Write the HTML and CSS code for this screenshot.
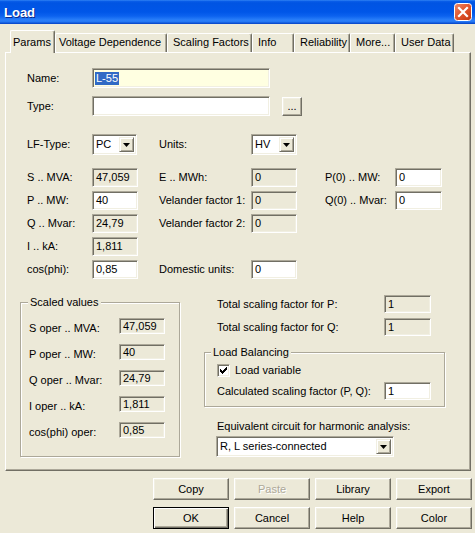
FILE: index.html
```html
<!DOCTYPE html>
<html>
<head>
<meta charset="utf-8">
<title>Load</title>
<link rel="stylesheet" href="styles.css">
</head>
<body>
<div class="window">
  <div class="titlebar">
    <span class="title">Load</span>
    <svg class="close" width="18" height="18" viewBox="0 0 18 18">
      <defs>
        <linearGradient id="cg" x1="0" y1="0" x2="1" y2="1">
          <stop offset="0" stop-color="#f08a6a"/>
          <stop offset="0.5" stop-color="#e0552d"/>
          <stop offset="1" stop-color="#c2350f"/>
        </linearGradient>
      </defs>
      <rect x="0.5" y="0.5" width="17" height="17" rx="3" fill="url(#cg)" stroke="#ffffff"/>
      <path d="M5 5L13 13M13 5L5 13" stroke="#ffffff" stroke-width="2.2" stroke-linecap="square"/>
    </svg>
  </div>
  <div class="client">
    <div class="tabs">
      <div class="tab sel t-params">Params</div>
      <div class="tab t-volt">Voltage Dependence</div>
      <div class="tab t-scal">Scaling Factors</div>
      <div class="tab t-info">Info</div>
      <div class="tab t-rel">Reliability</div>
      <div class="tab t-more">More...</div>
      <div class="tab t-user">User Data</div>
    </div>
    <div class="panel">
      <div class="sec-top">
        <div class="row r-name">
          <span class="lbl w65">Name:</span>
          <div class="fld wide name"><span class="hl">L-55</span></div>
        </div>
        <div class="row r-type">
          <span class="lbl w65">Type:</span>
          <div class="fld wide"></div>
          <div class="btn dots">...</div>
        </div>
        <div class="row r-lf">
          <span class="lbl w65">LF-Type:</span>
          <div class="combo w45"><span class="cv">PC</span><span class="cb"><svg width="7" height="4" viewBox="0 0 7 4"><path d="M0 0H7L3.5 4Z" fill="#000"/></svg></span></div>
          <span class="lbl units">Units:</span>
          <div class="combo w46"><span class="cv">HV</span><span class="cb"><svg width="7" height="4" viewBox="0 0 7 4"><path d="M0 0H7L3.5 4Z" fill="#000"/></svg></span></div>
        </div>
        <div class="grid">
          <span class="lbl c1">S .. MVA:</span><div class="fld dis">47,059</div>
          <span class="lbl c3">E .. MWh:</span><div class="fld dis">0</div>
          <span class="lbl c5">P(0) .. MW:</span><div class="fld">0</div>

          <span class="lbl c1">P .. MW:</span><div class="fld">40</div>
          <span class="lbl c3">Velander factor 1:</span><div class="fld dis">0</div>
          <span class="lbl c5">Q(0) .. Mvar:</span><div class="fld">0</div>

          <span class="lbl c1">Q .. Mvar:</span><div class="fld dis">24,79</div>
          <span class="lbl c3">Velander factor 2:</span><div class="fld dis">0</div>

          <span class="lbl c1">I .. kA:</span><div class="fld dis">1,811</div>

          <span class="lbl c1">cos(phi):</span><div class="fld">0,85</div>
          <span class="lbl c3">Domestic units:</span><div class="fld">0</div>
        </div>
      </div>
      <div class="sec-bottom">
        <div class="group scaled">
          <span class="gtitle">Scaled values</span>
          <div class="sgrid">
            <span class="slbl">S oper .. MVA:</span><div class="fld dis sf">47,059</div>
            <span class="slbl">P oper .. MW:</span><div class="fld dis sf">40</div>
            <span class="slbl">Q oper .. Mvar:</span><div class="fld dis sf">24,79</div>
            <span class="slbl">I oper .. kA:</span><div class="fld dis sf">1,811</div>
            <span class="slbl">cos(phi) oper:</span><div class="fld dis sf">0,85</div>
          </div>
        </div>
        <div class="rightcol">
          <div class="rc-row">
            <span class="lbl w167">Total scaling factor for P:</span>
            <div class="fld dis f47">1</div>
          </div>
          <div class="rc-row r2">
            <span class="lbl w167">Total scaling factor for Q:</span>
            <div class="fld dis f47">1</div>
          </div>
          <div class="group lb">
            <span class="gtitle lbt">Load Balancing</span>
            <div class="chk-row">
              <span class="chk"><svg width="7" height="7" viewBox="0 0 7 7"><path d="M6 0h1v1h-1z M5 1h2v1h-2z M0 2h1v1h-1z M4 2h3v1h-3z M0 3h2v1h-2z M3 3h3v1h-3z M0 4h5v1h-5z M1 5h3v1h-3z M2 6h1v1h-1z" fill="#000"/></svg></span>
              <span class="chk-lbl">Load variable</span>
            </div>
            <div class="calc-row">
              <span class="lbl w167">Calculated scaling factor (P, Q):</span>
              <div class="fld f47">1</div>
            </div>
          </div>
          <div class="eq-lbl">Equivalent circuit for harmonic analysis:</div>
          <div class="combo eq"><span class="cv">R, L series-connected</span><span class="cb"><svg width="7" height="4" viewBox="0 0 7 4"><path d="M0 0H7L3.5 4Z" fill="#000"/></svg></span></div>
        </div>
      </div>
    </div>
    <div class="buttons">
      <div class="btn">Copy</div>
      <div class="btn dis">Paste</div>
      <div class="btn">Library</div>
      <div class="btn">Export</div>
      <div class="btn def">OK</div>
      <div class="btn">Cancel</div>
      <div class="btn">Help</div>
      <div class="btn">Color</div>
    </div>
  </div>
</div>
</body>
</html>
```
FILE: styles.css
```css
* { box-sizing: border-box; }
html, body { margin: 0; padding: 0; }
body {
  background: #ece9d8;
  font-family: "Liberation Sans", Arial, sans-serif;
  font-size: 11px;
  color: #000;
  width: 475px;
  height: 533px;
  overflow: hidden;
}
.window { width: 475px; height: 533px; }

/* title bar */
.titlebar {
  height: 24px;
  display: flex;
  align-items: center;
  justify-content: space-between;
  padding: 0 3px 0 4px;
  background: linear-gradient(to bottom,
    #3a8cf6 0px, #0b5fe9 1px, #0054e3 3px, #0056e8 12px,
    #0c62ef 16px, #2a7ff9 20px, #2376f2 22px, #0a4fd2 23px, #0a48c8 24px);
}
.title {
  color: #fff;
  font-weight: bold;
  font-size: 13px;
  text-shadow: 1px 1px 0 #0a2a8a;
}
.close { display: block; }

/* client */
.client { padding: 6px 0 0 5px; }

.tabs {
  display: flex;
  align-items: flex-end;
  height: 22px;
  padding-left: 5px;
  position: relative;
  z-index: 1;
}
.tab {
  height: 19px;
  line-height: 17px;
  padding-left: 5px;
  border-top: 1px solid #fff;
  border-left: 1px solid #fff;
  border-right: 1px solid #716f64;
  box-shadow: inset -1px 0 #aca899;
  border-top-left-radius: 2px;
  border-top-right-radius: 2px;
  white-space: nowrap;
  background: #ece9d8;
}
.tab.sel {
  height: 23px;
  line-height: 23px;
  margin-bottom: -1px;
  padding-left: 2px;
}
.t-params { width: 45px; }
.t-volt { width: 112px; padding-left: 3px; }
.t-scal { width: 85px; }
.t-info { width: 42px; }
.t-rel { width: 56px; }
.t-more { width: 45px; }
.t-user { width: 59px; }

.panel {
  width: 466px;
  height: 419px;
  border-top: 1px solid #fff;
  border-left: 1px solid #fff;
  border-right: 1px solid #716f64;
  border-bottom: 1px solid #716f64;
  box-shadow: inset -1px -1px #aca899;
  padding-top: 15px;
}

/* generic controls */
.lbl { white-space: nowrap; line-height: 13px; }
.fld {
  height: 19px;
  border: 1px solid;
  border-color: #aca899 #fff #fff #aca899;
  box-shadow: inset 1px 1px #716f64, inset -1px -1px #f1efe2;
  background: #fff;
  padding-left: 3px;
  line-height: 17px;
  white-space: nowrap;
}
.fld.dis { background: #ece9d8; }

.btn {
  background: #ece9d8;
  border: 1px solid;
  border-color: #fff #716f64 #716f64 #fff;
  box-shadow: inset -1px -1px #aca899, inset 1px 1px #f1efe2;
  display: flex;
  align-items: center;
  justify-content: center;
  white-space: nowrap;
}
.btn.dis { color: #aca899; text-shadow: 1px 1px 0 #fff; }
.btn.def {
  border-color: #000;
  box-shadow: inset 1px 1px #fff, inset -1px -1px #716f64, inset -2px -2px #aca899;
}

.combo {
  display: flex;
  height: 21px;
  background: #fff;
  border: 1px solid;
  border-color: #aca899 #fff #fff #aca899;
  box-shadow: inset 1px 1px #716f64, inset -1px -1px #f1efe2;
  padding: 2px;
}
.cv { flex: 1; padding-left: 1px; line-height: 15px; white-space: nowrap; overflow: hidden; }
.cb {
  width: 15px;
  height: 15px;
  background: #ece9d8;
  border: 1px solid;
  border-color: #f1efe2 #716f64 #716f64 #f1efe2;
  box-shadow: inset 1px 1px #fff, inset -1px -1px #aca899;
  display: flex;
  align-items: center;
  justify-content: center;
}
.cb svg { display: block; }

/* top section */
.sec-top { padding-left: 21px; }
.row { display: flex; align-items: center; }
.r-name { height: 20px; }
.r-type { height: 20px; margin-top: 8px; }
.r-lf { height: 21px; margin-top: 18px; }
.w65 { width: 65px; }
.wide { width: 178px; height: 20px; }
.name { background: #ffffe1; padding-left: 2px; line-height: 18px; }
.hl { background: #316ac5; color: #fff; padding: 0 1px; display: inline-block; line-height: 13px; }
.dots { width: 20px; height: 19px; margin-left: 12px; align-items: flex-end; padding-bottom: 4px; line-height: 9px; }
.w45 { width: 45px; }
.w46 { width: 46px; }
.units { margin-left: 22px; width: 92px; }

.grid {
  margin-top: 13px;
  display: grid;
  grid-template-columns: 65px 46px 113px 46px 98px 47px;
  grid-template-rows: repeat(5, 19px);
  row-gap: 4px;
  align-items: center;
}
.c1 { grid-column: 1; }
.c3 { grid-column: 3; padding-left: 21px; }
.c5 { grid-column: 5; padding-left: 28px; }

/* bottom section */
.sec-bottom {
  display: flex;
  align-items: flex-start;
  padding-left: 14px;
  margin-top: 16px;
}
.group {
  position: relative;
  border: 1px solid #aca899;
  box-shadow: inset 1px 1px #fff, 1px 1px #fff;
}
.gtitle {
  position: absolute;
  top: -7px;
  left: 7px;
  padding: 0 2px;
  background: #ece9d8;
  line-height: 13px;
  white-space: nowrap;
}
.scaled { width: 160px; height: 155px; margin-top: 7px; }
.sgrid {
  display: grid;
  grid-template-columns: 90px 46px;
  grid-template-rows: repeat(5, 16px);
  row-gap: 10px;
  padding: 15px 0 0 8px;
}
.slbl { align-self: start; margin-top: 4px; line-height: 13px; white-space: nowrap; }
.sf { height: 16px; line-height: 15px; padding-left: 3px; }

.rightcol { margin-left: 24px; width: 241px; }
.rc-row { display: flex; align-items: center; height: 18px; padding-left: 13px; }
.rc-row.r2 { margin-top: 5px; }
.w167 { width: 167px; }
.f47 { width: 47px; height: 18px; line-height: 16px; }

.lb { height: 55px; margin-top: 16px; }
.lbt { left: 6px; }
.chk-row { display: flex; align-items: center; padding: 11px 0 0 12px; height: 24px; }
.chk {
  width: 13px;
  height: 13px;
  background: #fff;
  border: 1px solid;
  border-color: #aca899 #fff #fff #aca899;
  box-shadow: inset 1px 1px #716f64, inset -1px -1px #f1efe2;
  padding: 2px;
  display: block;
}
.chk svg { display: block; }
.chk-lbl { margin-left: 5px; line-height: 13px; }
.calc-row { display: flex; align-items: center; height: 18px; margin-top: 5px; padding-left: 12px; }

.eq-lbl { margin-top: 13px; padding-left: 13px; line-height: 13px; white-space: nowrap; }
.combo.eq { width: 178px; margin: 3px 0 0 12px; }

/* bottom buttons */
.buttons {
  display: grid;
  grid-template-columns: repeat(4, 76px);
  grid-auto-rows: 22px;
  column-gap: 5px;
  row-gap: 7px;
  margin-top: 7px;
  padding-left: 148px;
}
```
